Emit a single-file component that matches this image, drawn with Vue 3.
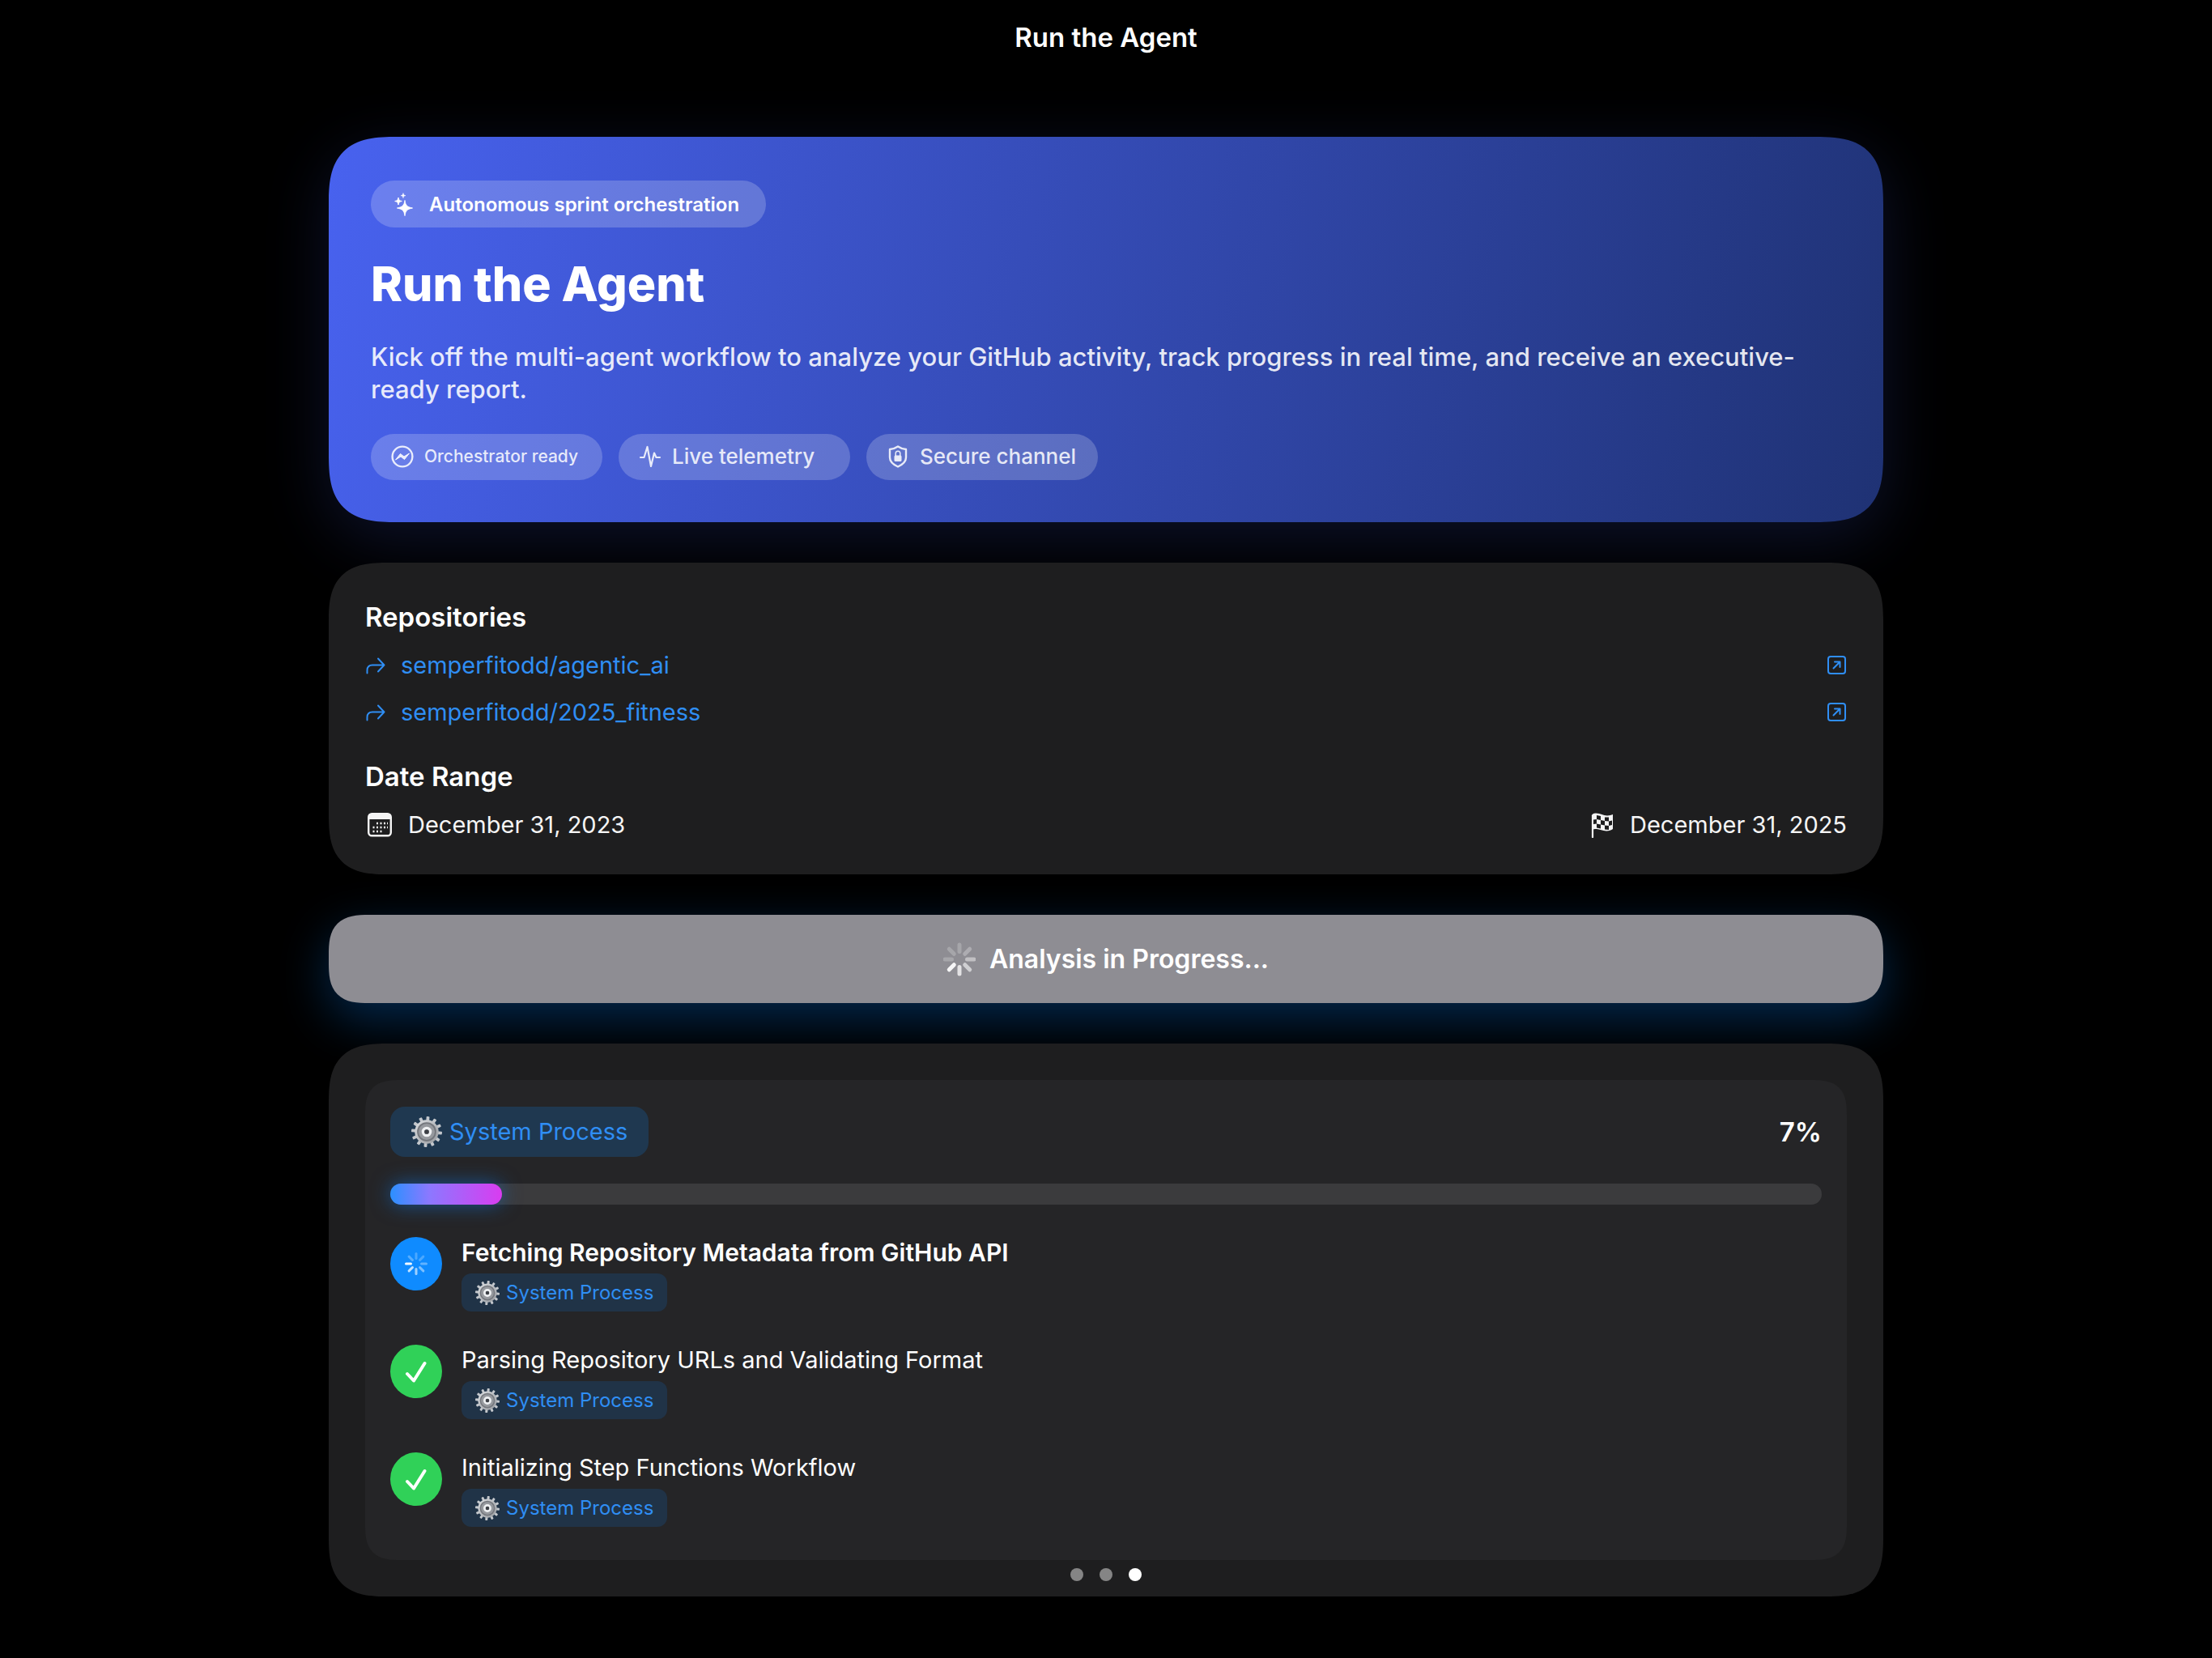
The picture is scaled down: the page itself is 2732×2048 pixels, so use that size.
<script setup>
const chips = [
  { label: 'Orchestrator ready', icon: 'bolt', small: true },
  { label: 'Live telemetry', icon: 'pulse' },
  { label: 'Secure channel', icon: 'shield' },
]

const repos = ['semperfitodd/agentic_ai', 'semperfitodd/2025_fitness']

const steps = [
  { title: 'Fetching Repository Metadata from GitHub API', state: 'active' },
  { title: 'Parsing Repository URLs and Validating Format', state: 'done' },
  { title: 'Initializing Step Functions Workflow', state: 'done' },
]

const progress = { label: '7%', value: 7, fill: 7.8 }
const teeth = Array.from({ length: 12 }, (_, i) => i * 30 + 5)
const buttonSpokes = [0.22, 0.28, 0.45, 0.58, 0.75, 0.92, 0.22, 0.22]
const stepSpokes = [0.25, 0.25, 0.35, 0.45, 0.6, 0.75, 0.95, 0.3]
</script>

<template>
  <div class="page">
    <svg class="defs" aria-hidden="true">
      <defs>
        <linearGradient id="steel" x1="0" y1="0" x2="1" y2="1">
          <stop offset="0" stop-color="#dcdfe2" />
          <stop offset="1" stop-color="#96999e" />
        </linearGradient>
        <symbol id="gear" viewBox="0 0 40 40">
          <rect
            v-for="a in teeth"
            :key="a"
            x="18"
            y="0"
            width="4"
            height="8"
            rx="1"
            fill="#c3c7cc"
            :transform="`rotate(${a} 20 20)`"
          />
          <circle cx="20" cy="20" r="15.5" fill="url(#steel)" />
          <circle cx="20" cy="20" r="12.5" fill="#74777d" />
          <circle cx="20" cy="20" r="10.5" fill="#96999e" />
          <circle cx="20" cy="20" r="4.8" fill="none" stroke="#eef0f2" stroke-width="3.6" />
          <circle cx="20" cy="20" r="3" fill="#3c3f45" />
        </symbol>
      </defs>
    </svg>

    <header class="topbar">Run the Agent</header>

    <main class="content">
      <section class="hero">
        <div class="badge">
          <svg width="30" height="30" viewBox="0 0 30 30" fill="#fff" aria-hidden="true">
            <path d="M17 9.5c.9 6.3 2.7 8.2 9.5 9.5-6.800 1.300-8.600 3.200-9.500 9.500-.9-6.300-2.700-8.200-9.500-9.500 6.800-1.300 8.600-3.200 9.500-9.500z" stroke="#fff" stroke-linejoin="round" />
            <path d="M9 6c.4 3 1.200 3.900 4.300 4.500-3.100.6-3.900 1.500-4.300 4.500-.4-3-1.200-3.900-4.300-4.500C7.800 9.900 8.600 9 9 6z" stroke="#fff" stroke-linejoin="round" />
            <path d="M15 .6c.3 2 .8 2.600 2.900 3-2.100.4-2.600 1-2.900 3-.3-2-.8-2.600-2.900-3 2.100-.4 2.600-1 2.900-3z" stroke="#fff" stroke-width=".6" stroke-linejoin="round" />
          </svg>
          <span>Autonomous sprint orchestration</span>
        </div>
        <h1>Run the Agent</h1>
        <p>
          Kick off the multi-agent workflow to analyze your GitHub activity, track progress in real
          time, and receive an executive-ready report.
        </p>
        <ul class="chips">
          <li v-for="c in chips" :key="c.label" class="chip" :class="{ small: c.small }">
            <svg v-if="c.icon === 'bolt'" width="28" height="28" viewBox="0 0 28 28" aria-hidden="true">
              <circle cx="14" cy="14" r="12.4" fill="none" stroke="currentColor" stroke-width="2.4" />
              <path d="M5.500 18 11.500 10.500 16 14 22.500 10 16.500 17.500 12 14z" fill="currentColor" stroke="currentColor" stroke-width="1" stroke-linejoin="round" />
            </svg>
            <svg v-else-if="c.icon === 'pulse'" width="28" height="28" viewBox="0 0 28 28" fill="none" stroke="currentColor" stroke-width="2.200" stroke-linecap="round" stroke-linejoin="round" aria-hidden="true">
              <path d="M2 15H6.500L10.500 2 15 26 19 9.500 21.500 15H26" />
            </svg>
            <svg v-else width="28" height="28" viewBox="0 0 28 28" aria-hidden="true">
              <path d="M14 1.500C17 3.600 20 4.600 24 5v10c0 5-3.500 8.500-10 11.500C7.500 23.500 4 20 4 15V5C8 4.600 11 3.600 14 1.500z" fill="none" stroke="currentColor" stroke-width="2.400" stroke-linejoin="round" />
              <rect x="9.500" y="12.500" width="9" height="7.500" rx="1.500" fill="currentColor" />
              <path d="M11.200 13v-3a2.800 2.800 0 0 1 5.600 0v3" fill="none" stroke="currentColor" stroke-width="1.500" />
            </svg>
            <span>{{ c.label }}</span>
          </li>
        </ul>
      </section>

      <section class="card details">
        <div class="group">
          <h2>Repositories</h2>
          <a v-for="r in repos" :key="r" class="repo" :href="`https://github.com/${r}`">
            <svg width="26" height="26" viewBox="0 0 26 26" fill="none" stroke="currentColor" stroke-width="2" stroke-linecap="round" stroke-linejoin="round" aria-hidden="true">
              <path d="M2.500 22.500v-3.500c0-4 2.500-6.500 6.500-6.500H23.500M16 4.500l7.500 8-7.500 8" />
            </svg>
            <span class="repo-name">{{ r }}</span>
            <svg width="24" height="24" viewBox="0 0 24 24" fill="none" stroke="currentColor" stroke-width="2" stroke-linecap="round" stroke-linejoin="round" aria-hidden="true">
              <rect x="1" y="1" width="21" height="21" rx="3" />
              <path d="M7.500 15.500l8-8M9 7.500h6.500v6.500" />
            </svg>
          </a>
        </div>
        <div class="group">
          <h2>Date Range</h2>
          <div class="dates">
            <div class="date">
              <svg width="36" height="32" viewBox="0 0 36 32" aria-hidden="true">
                <rect x="4.200" y="2.200" width="27.600" height="27" rx="4" fill="none" stroke="currentColor" stroke-width="2.400" />
                <path d="M4 9V6a4 4 0 0 1 4-4h20a4 4 0 0 1 4 4v3z" fill="currentColor" />
                <path d="M14 14h2M18.500 14h2M23 14h2M27 14h1M9.500 19h2M14 19h2M18.500 19h2M23 19h2M27 19h1M9.500 24h2M14 24h2M18.500 24h2" stroke="currentColor" stroke-width="2.400" />
              </svg>
              <span>December 31, 2023</span>
            </div>
            <div class="date">
              <svg width="34" height="32" viewBox="0 0 34 32" aria-hidden="true">
                <path d="M5 31V4.500" stroke="currentColor" stroke-width="2.200" stroke-linecap="round" />
                <path d="M4 5c0-2 1.500-3.500 5-3.500 6 0 9 3 14 3 3 0 5-1 7-1.500v18c-2 1.500-4.500 2.500-8 2.500-5 0-8-2.500-12-2.500-3 0-4.500.5-6 1z" fill="currentColor" />
                <path d="M10 4l5 1v5l-5-1zM20 6.500h5v5l-5-.5zM6 9.500l4-.5v5.500l-4 .5zM15 10l5 1v5.500l-5-1zM25 11.500l4-1V16l-4 1zM10 14.500l5 1v5l-5-1zM20 16.500l5 .5v5l-5-.5z" fill="#1e1e1f" />
              </svg>
              <span>December 31, 2025</span>
            </div>
          </div>
        </div>
      </section>

      <button type="button" class="run" aria-busy="true">
        <svg width="40" height="42" viewBox="-20 -21 40 42" aria-hidden="true">
          <rect v-for="(o, i) in buttonSpokes" :key="i" x="-2.500" y="-20.500" width="5" height="13.500" rx="2.500" fill="#fff" :opacity="o" :transform="`rotate(${i * 45})`" />
        </svg>
        <span>Analysis in Progress...</span>
      </button>

      <section class="card status">
        <div class="panel">
          <div class="panel-head">
            <span class="tag large">
              <svg width="38" height="38" aria-hidden="true"><use href="#gear" /></svg>
              System Process
            </span>
            <strong>{{ progress.label }}</strong>
          </div>
          <div class="track" role="progressbar" aria-label="Analysis progress" :aria-valuenow="progress.value" aria-valuemin="0" aria-valuemax="100">
            <div class="fill" :style="{ width: progress.fill + '%' }"></div>
          </div>
          <ol class="steps">
            <li v-for="s in steps" :key="s.title" class="step" :class="s.state">
              <span class="mark">
                <svg v-if="s.state === 'active'" width="28" height="30" viewBox="-14 -15 28 30" aria-hidden="true">
                  <rect v-for="(o, i) in stepSpokes" :key="i" x="-1.500" y="-14" width="3" height="9" rx="1.500" fill="#fff" :opacity="o" :transform="`rotate(${i * 45})`" />
                </svg>
                <svg v-else width="28" height="28" viewBox="0 0 28 28" fill="none" stroke="#fff" stroke-width="4" stroke-linecap="round" stroke-linejoin="round" aria-hidden="true">
                  <path d="M3 17l8 8.500L24.500 4" />
                </svg>
              </span>
              <div class="step-body">
                <span class="step-title">{{ s.title }}</span>
                <span class="tag">
                  <svg width="30" height="30" aria-hidden="true"><use href="#gear" /></svg>
                  System Process
                </span>
              </div>
            </li>
          </ol>
        </div>
      </section>
    </main>

    <nav class="dots" aria-label="Pages">
      <button type="button" aria-label="Page 1"></button>
      <button type="button" aria-label="Page 2"></button>
      <button type="button" aria-label="Page 3" aria-current="page"></button>
    </nav>
  </div>
</template>

<style>
body {
  background: #000;
}
</style>

<style scoped>
.page {
  position: relative;
  box-sizing: border-box;
  min-height: 100vh;
  padding: 0 40px 75px;
  background: #000;
  color: #fff;
  font-family: Inter, 'Liberation Sans', sans-serif;
  font-size: 29px;
  line-height: 38px;
}
.defs {
  position: absolute;
  width: 0;
  height: 0;
}
h1,
h2,
p,
ul,
ol {
  margin: 0;
  padding: 0;
}
ul,
ol {
  list-style: none;
}
svg {
  flex: none;
}
.topbar {
  padding: 25px 0;
  font-size: 33px;
  font-weight: 600;
  line-height: 42px;
  text-align: center;
}
.content {
  display: flex;
  flex-direction: column;
  gap: 50px;
  max-width: 1920px;
  margin: 77px auto 0;
}
.hero {
  display: flex;
  flex-direction: column;
  align-items: flex-start;
  gap: 35px;
  padding: 54px 52px 52px;
  border-radius: 66px;
  background: linear-gradient(104deg, #4862ef, #1f3274);
  box-shadow: 0 20px 80px rgba(72, 98, 239, 0.18);
}
.badge,
.chip {
  display: flex;
  align-items: center;
  border-radius: 29px;
  background: rgba(255, 255, 255, 0.2);
}
.badge {
  gap: 17px;
  padding: 10px 33px 8px 25px;
  font-size: 24px;
  font-weight: 600;
  line-height: 40px;
}
h1 {
  font-size: 59px;
  font-weight: 800;
  line-height: 70px;
}
p {
  color: rgba(255, 255, 255, 0.88);
  font-size: 31px;
  font-weight: 500;
  line-height: 40px;
}
.chips {
  display: flex;
  gap: 20px;
}
.chip {
  box-sizing: border-box;
  gap: 13px;
  width: 286px;
  height: 57px;
  padding: 0 0 2px 25px;
  color: rgba(255, 255, 255, 0.86);
  font-size: 26px;
  font-weight: 500;
  white-space: nowrap;
}
.chip.small {
  font-size: 21px;
}
.card {
  border-radius: 58px;
  background: #1e1e1f;
}
.details {
  display: flex;
  flex-direction: column;
  gap: 39px;
  padding: 46px 45px 42px;
}
.group {
  display: flex;
  flex-direction: column;
  gap: 20px;
}
h2 {
  font-size: 33px;
  font-weight: 600;
  line-height: 42px;
}
.repo {
  display: flex;
  align-items: center;
  gap: 18px;
  color: #2f8ef4;
  text-decoration: none;
}
.repo-name {
  flex: 1;
}
.dates,
.panel-head {
  display: flex;
  align-items: center;
  justify-content: space-between;
}
.date {
  display: flex;
  align-items: center;
  gap: 17px;
  color: #f5f5f5;
}
.run {
  display: flex;
  align-items: center;
  justify-content: center;
  gap: 17px;
  height: 109px;
  border: 0;
  border-radius: 40px;
  background: #8e8d93;
  box-shadow: 0 20px 60px rgba(10, 132, 255, 0.3);
  color: #fff;
  font: 600 32px/42px Inter, 'Liberation Sans', sans-serif;
}
.status {
  padding: 45px;
}
.panel {
  padding: 33px 31px 41px;
  border-radius: 34px;
  background: #252527;
}
.tag {
  display: flex;
  align-items: center;
  gap: 8px;
  padding: 0 17px;
  border-radius: 12px;
  background: #203347;
  color: #2f8ef4;
  font-size: 24px;
  line-height: 47px;
}
.tag.large {
  gap: 9px;
  padding: 0 26px;
  border-radius: 18px;
  background: #1f3850;
  font-size: 29px;
  line-height: 62px;
}
.panel-head strong {
  font-size: 33px;
  font-weight: 600;
}
.track {
  height: 26px;
  margin: 33px 0 40px;
  border-radius: 13px;
  background: #3b3b3d;
}
.fill {
  height: 100%;
  border-radius: 13px;
  background: linear-gradient(90deg, #2b90ff, #8c78ff 35%, #d93cf0);
  box-shadow: 0 0 24px rgba(10, 132, 255, 0.5);
}
.steps {
  display: flex;
  flex-direction: column;
  gap: 41px;
}
.step {
  display: flex;
  align-items: flex-start;
  gap: 24px;
}
.mark {
  display: grid;
  place-items: center;
  width: 64px;
  height: 66px;
  border-radius: 50%;
  background: #30d158;
}
.active .mark {
  background: #0f8bff;
}
.active .step-title {
  font-size: 30px;
  font-weight: 600;
}
.step-body {
  display: flex;
  flex-direction: column;
  align-items: flex-start;
  gap: 7px;
}
.dots {
  position: absolute;
  right: 0;
  bottom: 95px;
  left: 0;
  display: flex;
  justify-content: center;
  gap: 20px;
}
.dots button {
  width: 16px;
  height: 16px;
  padding: 0;
  border: 0;
  border-radius: 50%;
  background: #858585;
}
.dots button[aria-current] {
  background: #fff;
}

/* Continuous-curvature corners where the browser can draw them */
@supports (corner-shape: superellipse(1.5)) {
  .hero,
  .card,
  .run,
  .panel {
    corner-shape: superellipse(1.5);
  }
  .hero {
    border-radius: 84px;
  }
  .card {
    border-radius: 74px;
  }
  .run {
    border-radius: 50px;
  }
  .panel {
    border-radius: 44px;
  }
}
</style>
